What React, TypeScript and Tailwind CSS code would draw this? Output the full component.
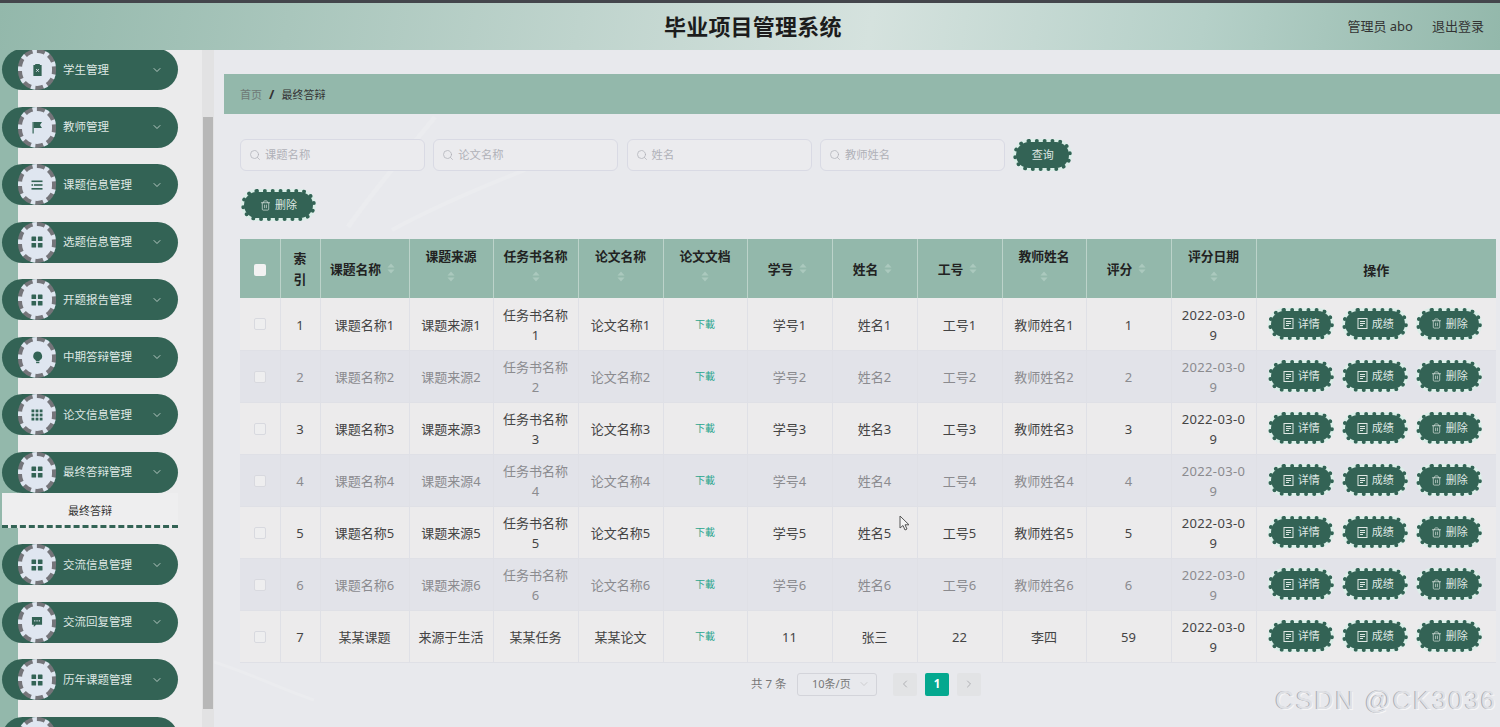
import { ChevronDown, ChevronLeft, ChevronRight, Search, Trash2 } from "lucide-react";

const font = "font-['Noto_Sans','Noto_Sans_CJK_SC',sans-serif]";

const toothed =
  "m-[3px] h-[26px] rounded-full bg-[#336355] text-[11px] text-[#dfe8e4] shadow-[0_0_0_3px_#dcefe9] outline-[4px] outline-dotted outline-[#336355] -outline-offset-1";

function GridIcon() {
  return (
    <svg width="12" height="12" viewBox="0 0 12 12" fill="#336355">
      <rect x="0.5" y="0.5" width="4.6" height="4.6" rx="0.6" />
      <rect x="6.9" y="0.5" width="4.6" height="4.6" rx="0.6" />
      <rect x="0.5" y="6.9" width="4.6" height="4.6" rx="0.6" />
      <rect x="6.9" y="6.9" width="4.6" height="4.6" rx="0.6" />
    </svg>
  );
}

function ClipIcon() {
  return (
    <svg width="11" height="13" viewBox="0 0 12 14" fill="#336355">
      <path d="M1.5 2h2V1h5v1h2v12h-9z" />
      <path d="M4.5 6.5l3 3M7.5 6.5l-3 3" stroke="#dfe6f0" strokeWidth="1" />
    </svg>
  );
}

function FlagIcon() {
  return (
    <svg width="12" height="13" viewBox="0 0 12 13" fill="#336355">
      <path d="M1.5 1h1.2v11.5H1.5z" />
      <path d="M2.7 1H11L9 4l2 3H2.7z" />
    </svg>
  );
}

function ListIcon() {
  return (
    <svg width="12" height="12" viewBox="0 0 12 12" fill="#336355">
      <rect x="0.5" y="1.5" width="11" height="1.6" />
      <rect x="3" y="5.2" width="8.5" height="1.6" />
      <rect x="0.5" y="5.2" width="1.6" height="1.6" />
      <rect x="0.5" y="9" width="11" height="1.6" />
    </svg>
  );
}

function BulbIcon() {
  return (
    <svg width="11" height="13" viewBox="0 0 12 14" fill="#336355">
      <path d="M6 0.5a5 5 0 0 1 2.6 9.3L8 11H4.5l-.7-1.2A5 5 0 0 1 6 0.5z" />
      <rect x="4.5" y="11.8" width="3.5" height="1.4" />
    </svg>
  );
}

function NineIcon() {
  return (
    <svg width="12" height="12" viewBox="0 0 12 12" fill="#336355">
      {[0.5, 4.6, 8.7].flatMap((y) =>
        [0.5, 4.6, 8.7].map((x) => <rect key={`${x}-${y}`} x={x} y={y} width="2.8" height="2.8" />)
      )}
    </svg>
  );
}

function ChatIcon() {
  return (
    <svg width="12" height="12" viewBox="0 0 13 13" fill="#336355">
      <path d="M1 1h11v8.5H5.5L3 12V9.5H1z" />
      <rect x="3.4" y="4.6" width="1.3" height="1.3" fill="#dfe6f0" />
      <rect x="5.9" y="4.6" width="1.3" height="1.3" fill="#dfe6f0" />
      <rect x="8.4" y="4.6" width="1.3" height="1.3" fill="#dfe6f0" />
    </svg>
  );
}

function DocIcon() {
  return (
    <svg width="11" height="11" viewBox="0 0 11 11" fill="none" stroke="currentColor" strokeWidth="1">
      <rect x="1" y="0.5" width="9" height="10" />
      <path d="M3 3.5h5M3 5.5h5M3 7.5h3" />
    </svg>
  );
}

function MenuItem({ icon, label }: { icon: React.ReactNode; label?: string }) {
  return (
    <div className="relative flex h-[41px] w-[176px] items-center rounded-full bg-[#336355] pl-[61px] pr-[15px] text-[11.5px] text-[#dfe8e4]">
      <div className="absolute left-[16px] top-0 flex h-[41px] w-[38px] items-center justify-center rounded-full border-4 border-dashed border-[#75757a] bg-[#dfe6f0] bg-clip-border">
        {icon}
      </div>
      <span className="flex-1">{label}</span>
      {label && <ChevronDown size={12} strokeWidth={1.5} className="text-[#dfe8e4]" />}
    </div>
  );
}

function Sidebar() {
  return (
    <aside className="relative h-full w-[214px] shrink-0 overflow-hidden bg-[#ebebec]">
      <div className="absolute left-0 top-0 h-full w-[18px] bg-[#93b8ab]" />
      <div className="relative -mt-px flex w-[202px] flex-col gap-[16.5px] pl-[2px]">
        <MenuItem icon={<ClipIcon />} label="学生管理" />
        <MenuItem icon={<FlagIcon />} label="教师管理" />
        <MenuItem icon={<ListIcon />} label="课题信息管理" />
        <MenuItem icon={<GridIcon />} label="选题信息管理" />
        <MenuItem icon={<GridIcon />} label="开题报告管理" />
        <MenuItem icon={<BulbIcon />} label="中期答辩管理" />
        <MenuItem icon={<NineIcon />} label="论文信息管理" />
        <div className="flex flex-col">
          <MenuItem icon={<GridIcon />} label="最终答辩管理" />
          <div className="flex h-[35px] w-[176px] items-center justify-center border-b-[3px] border-dashed border-[#336355] bg-[#eeeeef] pt-[5px] text-[11px] text-[#333]">
            最终答辩
          </div>
        </div>
        <MenuItem icon={<GridIcon />} label="交流信息管理" />
        <MenuItem icon={<ChatIcon />} label="交流回复管理" />
        <MenuItem icon={<GridIcon />} label="历年课题管理" />
        <MenuItem icon={<GridIcon />} />
      </div>
      {/* scrollbar */}
      <div className="absolute right-0 top-0 flex h-full w-[12px] flex-col bg-[#e2e2e3] pt-[67px]">
        <div className="ml-[1px] h-[592px] w-[10px] bg-[#b7b7b7]" />
      </div>
    </aside>
  );
}

function ActionButton({ label, trash, wide }: { label: string; trash?: boolean; wide?: boolean }) {
  return (
    <button className={`flex items-center justify-center gap-1 ${toothed} ${wide ? "w-[69px]" : "w-[60px]"}`}>
      {trash ? <Trash2 size={11} strokeWidth={1.5} /> : <DocIcon />}
      {label}
    </button>
  );
}

function SearchBox({ placeholder }: { placeholder: string }) {
  return (
    <div className="flex h-[32px] w-[185px] items-center gap-[4px] rounded-md border border-[#d9dae4] bg-[#ebebee] px-2 text-[11.3px] text-[#b0b1b8]">
      <Search size={12} strokeWidth={1.5} />
      {placeholder}
    </div>
  );
}

function SortArrows() {
  return (
    <svg width="8" height="11" viewBox="0 0 8 11" fill="#abc9be" className="shrink-0">
      <path d="M4 0.5L7.5 4.5H0.5z" />
      <path d="M4 10.5L0.5 6.5h7z" />
    </svg>
  );
}

const widths = [40, 40, 89, 84, 85, 85, 84, 85, 85, 85, 84, 85, 85, 240];

type Head = { title: string; stacked?: boolean };

const heads: Head[] = [
  { title: "课题名称" },
  { title: "课题来源", stacked: true },
  { title: "任务书名称", stacked: true },
  { title: "论文名称", stacked: true },
  { title: "论文文档", stacked: true },
  { title: "学号" },
  { title: "姓名" },
  { title: "工号" },
  { title: "教师姓名", stacked: true },
  { title: "评分" },
  { title: "评分日期", stacked: true },
];

const rows = [1, 2, 3, 4, 5, 6].map((n) => ({
  n: String(n),
  values: [`课题名称${n}`, `课题来源${n}`, `任务书名称${n}`, `论文名称${n}`],
  rest: [`学号${n}`, `姓名${n}`, `工号${n}`, `教师姓名${n}`, String(n)],
}));
rows.push({
  n: "7",
  values: ["某某课题", "来源于生活", "某某任务", "某某论文"],
  rest: ["11", "张三", "22", "李四", "59"],
});

function DataTable() {
  const td = "border-r border-b border-[#dfe0e6] text-center align-middle";
  return (
    <table className="w-[1256px] table-fixed border-collapse text-[13px] leading-[20px]">
      <colgroup>
        {widths.map((w, i) => (
          <col key={i} style={{ width: w }} />
        ))}
      </colgroup>
      <thead>
        <tr className="h-[59px] bg-[#93b8ab] text-[12.8px] font-semibold text-[#222]">
          <th className="border-r border-[#bcd3ca] pt-[3px]">
            <div className="mx-auto h-[12px] w-[12px] rounded-[2px] bg-[#f2f2f2]" />
          </th>
          <th className="border-r border-[#bcd3ca] px-2 pt-px leading-[21px]">索引</th>
          {heads.map((h) => (
            <th key={h.title} className="border-r border-[#bcd3ca] px-1 align-middle">
              {h.stacked ? (
                <div className="-mt-[9px] flex flex-col items-center gap-[5.5px]">
                  <span>{h.title}</span>
                  <SortArrows />
                </div>
              ) : (
                <div className="flex items-center justify-center gap-[6px] pr-[4px]">
                  <span>{h.title}</span>
                  <SortArrows />
                </div>
              )}
            </th>
          ))}
          <th className="pt-[3px] text-[13px]">操作</th>
        </tr>
      </thead>
      <tbody>
        {rows.map((r, i) => (
          <tr key={r.n} className={`h-[52px] ${i % 2 === 0 ? "bg-[#ecebec] text-[#444]" : "bg-[#e2e3e9] text-[#8b8b8f]"}`}>
            <td className={`${td} pt-px`}>
              <div className="mx-auto h-[12px] w-[12px] rounded-[2px] border border-[#d8d9df] bg-[#eeeeef]" />
            </td>
            <td className={`${td} pt-[2px]`}>{r.n}</td>
            {r.values.map((v) => (
              <td key={v} className={`${td} px-2 pt-[2px] break-all`}>
                {v}
              </td>
            ))}
            <td className={`${td} text-[10px] text-[#2aa58c]`}>下載</td>
            {r.rest.map((v, j) => (
              <td key={j} className={`${td} pt-[2px]`}>
                {v}
              </td>
            ))}
            <td className={`${td} px-2 pt-[2px] tracking-[0.35px] break-all`}>2022-03-09</td>
            <td className={`${td} border-r-0`}>
              <div className="flex items-center justify-center gap-[8px] pr-[2px]">
                <ActionButton label="详情" />
                <ActionButton label="成绩" />
                <ActionButton label="删除" trash />
              </div>
            </td>
          </tr>
        ))}
      </tbody>
    </table>
  );
}

function Pager() {
  return (
    <div className="mt-[10px] flex h-[23px] items-center pl-[511px] text-[11.5px] text-[#777]">
      <span className="w-[46px]">共 7 条</span>
      <div className="flex h-[23px] w-[80px] items-center justify-between rounded-[3px] border border-[#d3d4da] pl-[14px] pr-[6px] text-[11px]">
        10条/页
        <ChevronDown size={12} strokeWidth={1.2} className="text-[#bbb]" />
      </div>
      <div className="ml-[16px] flex h-[23px] w-[24px] items-center justify-center rounded-[2px] bg-[#e2e3e5] text-[#b0b1b5]">
        <ChevronLeft size={12} strokeWidth={2} />
      </div>
      <div className="ml-[8px] flex h-[23px] w-[24px] items-center justify-center rounded-[2px] bg-[#04a88f] font-bold text-white">
        1
      </div>
      <div className="ml-[8px] flex h-[23px] w-[24px] items-center justify-center rounded-[2px] bg-[#e2e3e5] text-[#b0b1b5]">
        <ChevronRight size={12} strokeWidth={2} />
      </div>
    </div>
  );
}

export default function App() {
  return (
    <div className={`relative flex h-[727px] w-[1500px] flex-col overflow-hidden bg-[#e8e9ed] ${font}`}>
      <div className="h-[3px] shrink-0 bg-[#44464c]" />
      <header className="flex h-[47px] shrink-0 items-center justify-between bg-[linear-gradient(100deg,#93b8ab_0%,#d5e2de_58%,#b5d0c8_80%,#93b8ab_100%)] pl-[664px] pr-[16px]">
        <h1 className="text-[22px] font-bold tracking-[0.2px] text-[#1c1c1c]">毕业项目管理系统</h1>
        <div className="flex items-center gap-[19px] text-[13px] text-[#333]">
          <span>管理员 abo</span>
          <span>退出登录</span>
        </div>
      </header>
      <div className="flex min-h-0 flex-1">
        <Sidebar />
        <main className="relative min-w-0 flex-1 pl-[10px] pt-[24px]">
          {/* faint paper folds in the page background */}
          <svg className="pointer-events-none absolute inset-0 h-full w-full" viewBox="0 0 1286 677" fill="none">
            <path d="M221 67C190 105 160 140 134 177" stroke="#ebecef" strokeWidth="5" />
            <path d="M311 120C260 140 215 160 178 180" stroke="#ebecef" strokeWidth="4" />
            <path d="M0 612C40 625 70 640 100 650" stroke="#ebecef" strokeWidth="3" />
          </svg>
          <div className="relative flex h-[40px] items-center gap-[7px] bg-[#93b8ab] pl-[16px] pt-[2px] text-[11px] text-[#333]">
            <span className="text-[#6f7a76]">首页</span>
            <span className="text-[13px] font-bold">/</span>
            <span>最终答辩</span>
          </div>
          <div className="relative pl-[16px] pt-[25px]">
            <div className="flex items-center gap-[8.3px]">
              <SearchBox placeholder="课题名称" />
              <SearchBox placeholder="论文名称" />
              <SearchBox placeholder="姓名" />
              <SearchBox placeholder="教师姓名" />
              <button className={`flex w-[53px] items-center justify-center ${toothed}`}>查询</button>
            </div>
            <div className="mt-[18px] flex pl-[1px]">
              <ActionButton label="删除" trash wide />
            </div>
            <div className="mt-[18px]">
              <DataTable />
            </div>
            <Pager />
          </div>
        </main>
      </div>
      {/* mouse pointer caught in the capture */}
      <svg className="absolute left-[899px] top-[515px]" width="12" height="17" viewBox="0 0 12 17" fill="#f4f4f4" stroke="#555" strokeWidth="1">
        <path d="M1 1v12l3-2.5 2 4.5 2-1-2-4.2h4z" />
      </svg>
      {/* watermark */}
      <div className="absolute bottom-[7px] right-[3px] font-['Liberation_Sans',sans-serif] text-[26px] tracking-[1.7px] text-[#dfe0e4] [text-shadow:-1px_0_0_#a9abb2,1px_1px_0_#f6f6f7]">
        CSDN @CK3036
      </div>
    </div>
  );
}
